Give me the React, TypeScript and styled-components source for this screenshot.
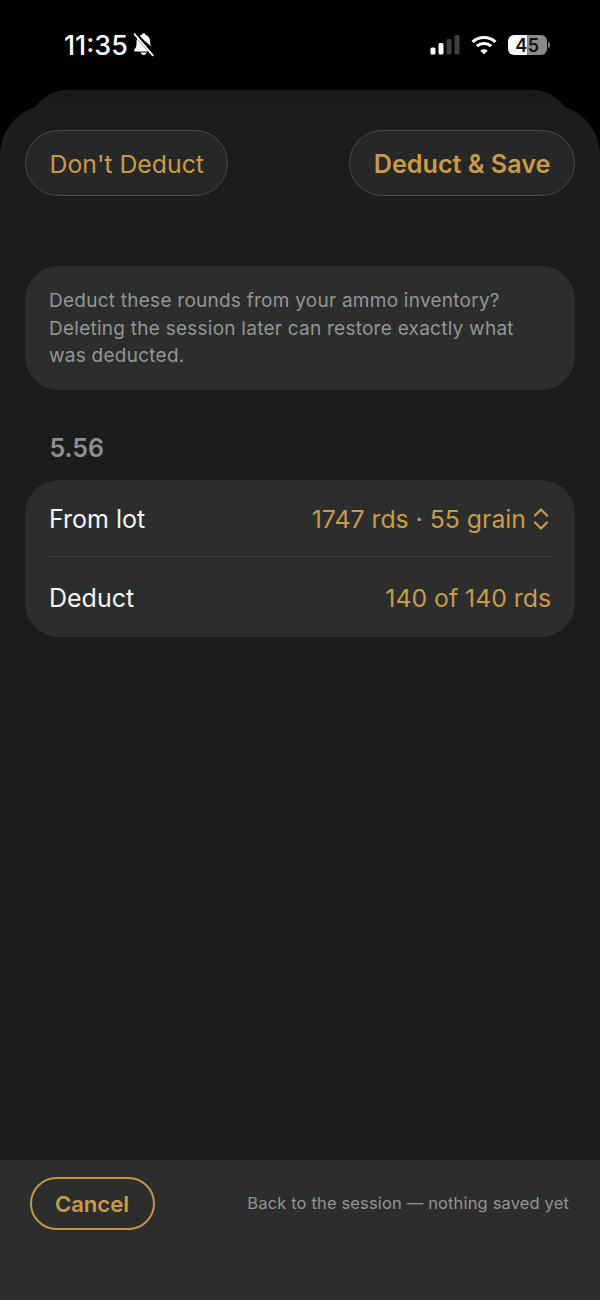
import React from "react";
import styled, { createGlobalStyle } from "styled-components";

const Global = createGlobalStyle`
  html, body { margin: 0; padding: 0; background: #000; }
  body { font-family: Inter, "Liberation Sans", sans-serif; }
`;

const Screen = styled.div`
  width: 600px; height: 1300px; background: #000; display: flex; flex-direction: column; overflow: hidden;
`;
const StatusBar = styled.div`
  height: 90px; flex: none; box-sizing: border-box; padding: 30px 50px 0 64px;
  display: flex; justify-content: space-between; align-items: flex-start; color: #fff;
`;
const TimeGroup = styled.div`
  display: flex; align-items: center; gap: 3px; height: 30px;
`;
const Time = styled.span`
  font-size: 26.800px; font-weight: 500; line-height: 30px;
`;
const StatusIcons = styled.div`
  display: flex; align-items: center; gap: 11px; height: 30px;
`;
const BackSheet = styled.div`
  flex: none; height: 60px; margin: 0 28px -45px; background: #191b1a; border-radius: 40px 40px 0 0;
`;
const Sheet = styled.div`
  flex: 1; position: relative; display: flex; flex-direction: column; background: #1b1d1c;
  border-radius: 50px 50px 0 0; min-height: 0;
`;
const Content = styled.div`
  flex: 1; box-sizing: border-box; padding: 25px 25px 0; display: flex; flex-direction: column;
`;
const TopActions = styled.div`
  display: flex; justify-content: space-between;
`;
const PillButton = styled.button<{ $strong?: boolean }>`
  height: 66px; box-sizing: border-box; padding: 2px 23.500px 0; border-radius: 33px;
  background: #262827; border: 1px solid #474948; color: #c99a48;
  font-family: inherit; font-size: ${(p) => (p.$strong ? 25.2 : 24.8)}px; font-weight: ${(p) => (p.$strong ? 600 : 400)};
`;
const Notice = styled.p`
  margin: 70px 0 0; padding: 21px 24px 20px; background: #2c2e2d; border-radius: 34px;
  font-size: 19px; line-height: 27.500px; color: #939594; letter-spacing: 0.250px;
`;
const GroupLabel = styled.div`
  margin: 42px 0 15px 24.500px; font-size: 25px; line-height: 33px; font-weight: 600; color: #8e9090;
`;
const Card = styled.div`
  background: #2c2e2d; border-radius: 34px; padding: 0 24px;
`;
const Row = styled.div<{ $divided?: boolean }>`
  height: ${(p) => (p.$divided ? 77 : 80)}px; box-sizing: border-box; padding-top: 2px; display: flex; align-items: center;
  justify-content: space-between; font-size: 25px;
  border-bottom: ${(p) => (p.$divided ? "1px solid #3e403f" : "none")};
`;
const RowLabel = styled.span`
  color: #f7f7f7;
`;
const RowValue = styled.span`
  color: #c99a48; display: flex; align-items: center; gap: 5px; font-size: 24.800px;
`;
const BottomBar = styled.div`
  flex: none; height: 140px; box-sizing: border-box; background: #2c2e2d; padding: 17px 31px 0 30px;
  display: flex; justify-content: space-between; align-items: flex-start;
`;
const CancelButton = styled.button`
  width: 125px; height: 53px; box-sizing: border-box; border-radius: 27px; background: transparent;
  border: 2px solid #c49547; color: #c99a48; font-family: inherit; font-size: 22.100px; font-weight: 600; padding: 0 1px 0 0;
`;
const Hint = styled.span`
  font-size: 16.500px; line-height: 53px; color: #929493; letter-spacing: 0.150px;
`;

const MutedBell = () => (
  <svg width="26" height="26" viewBox="0 0 26 26" fill="#fff">
    <path d="M6.600 4.600 19.600 19.400H4c-.9 0-1.300-.9-.8-1.600 1.300-1.600 2.300-2.600 2.300-6 0-1 0-2.200.1-3zM8.300 4.300C9 3.500 10 3 11 2.700 11.200 1.800 11.900 1.300 12.700 1.300s1.500.5 1.700 1.400c2.900.8 4.700 3.400 4.700 6.700 0 2.600.6 4 1.500 5.300z" />
    <path d="M9.800 20.600h5.800c-.3 1.500-1.500 2.500-2.900 2.500s-2.600-1-2.900-2.500z" />
    <path d="M4.500 1.800 22.300 22.600" stroke="#000" strokeWidth="4" fill="none" />
    <path d="M3.700 2.300 21.800 23.300" stroke="#fff" strokeWidth="1.800" strokeLinecap="round" fill="none" />
  </svg>
);

const Signal = () => (
  <svg width="30" height="20" viewBox="0 0 30 20">
    <rect x="0.500" y="12.500" width="5" height="7" rx="1.500" fill="#fff" />
    <rect x="8.500" y="8" width="5" height="11.500" rx="1.500" fill="#fff" />
    <rect x="16.500" y="4" width="5" height="15.500" rx="1.500" fill="#3f3f3f" />
    <rect x="24.500" y="0" width="5" height="19.500" rx="1.500" fill="#3f3f3f" />
  </svg>
);

const Wifi = () => (
  <svg width="26" height="20" viewBox="0 0 26 20" fill="none" stroke="#fff" strokeWidth="3">
    <path d="M1.500 6.800C8 1 18 1 24.500 6.800" />
    <path d="M5.800 11.200C10 7.500 16 7.500 20.200 11.200" />
    <path d="M13 19.500 9.300 15.400C11.500 13.700 14.500 13.700 16.700 15.400Z" fill="#fff" stroke="none" />
  </svg>
);

const BatteryShell = styled.div`
  position: relative; width: 39px; height: 20px; border-radius: 6px; overflow: hidden;
  background: linear-gradient(90deg, #fff 0 48%, #8a8a8a 48% 100%);
  display: flex; align-items: center; justify-content: center;
  color: #111; font-size: 18px; font-weight: 600; letter-spacing: 0.500px;
`;
const BatteryWrap = styled.div`
  display: flex; align-items: center; gap: 1px;
`;
const BatteryCap = styled.div`
  width: 2px; height: 6px; border-radius: 0 2px 2px 0; background: #7a7a7a;
`;

const UpDown = () => (
  <svg width="20" height="26" viewBox="0 0 20 26" fill="none" stroke="#c99a48" strokeWidth="2.200" strokeLinecap="round" strokeLinejoin="round">
    <path d="M4 9.500 10 3.500 16 9.500" />
    <path d="M4 16.500 10 22.500 16 16.500" />
  </svg>
);

export default function App() {
  return (
    <Screen>
      <Global />
      <StatusBar>
        <TimeGroup>
          <Time>11:35</Time>
          <MutedBell />
        </TimeGroup>
        <StatusIcons>
          <Signal />
          <Wifi />
          <BatteryWrap>
            <BatteryShell>45</BatteryShell>
            <BatteryCap />
          </BatteryWrap>
        </StatusIcons>
      </StatusBar>
      <BackSheet />
      <Sheet>
        <Content>
          <TopActions>
            <PillButton>Don't Deduct</PillButton>
            <PillButton $strong>Deduct &amp; Save</PillButton>
          </TopActions>
          <Notice>
            Deduct these rounds from your ammo inventory?
            <br />
            Deleting the session later can restore exactly what
            <br />
            was deducted.
          </Notice>
          <GroupLabel>5.56</GroupLabel>
          <Card>
            <Row $divided>
              <RowLabel>From lot</RowLabel>
              <RowValue>
                1747 rds · 55 grain
                <UpDown />
              </RowValue>
            </Row>
            <Row>
              <RowLabel>Deduct</RowLabel>
              <RowValue>140 of 140 rds</RowValue>
            </Row>
          </Card>
        </Content>
        <BottomBar>
          <CancelButton>Cancel</CancelButton>
          <Hint>Back to the session — nothing saved yet</Hint>
        </BottomBar>
      </Sheet>
    </Screen>
  );
}
